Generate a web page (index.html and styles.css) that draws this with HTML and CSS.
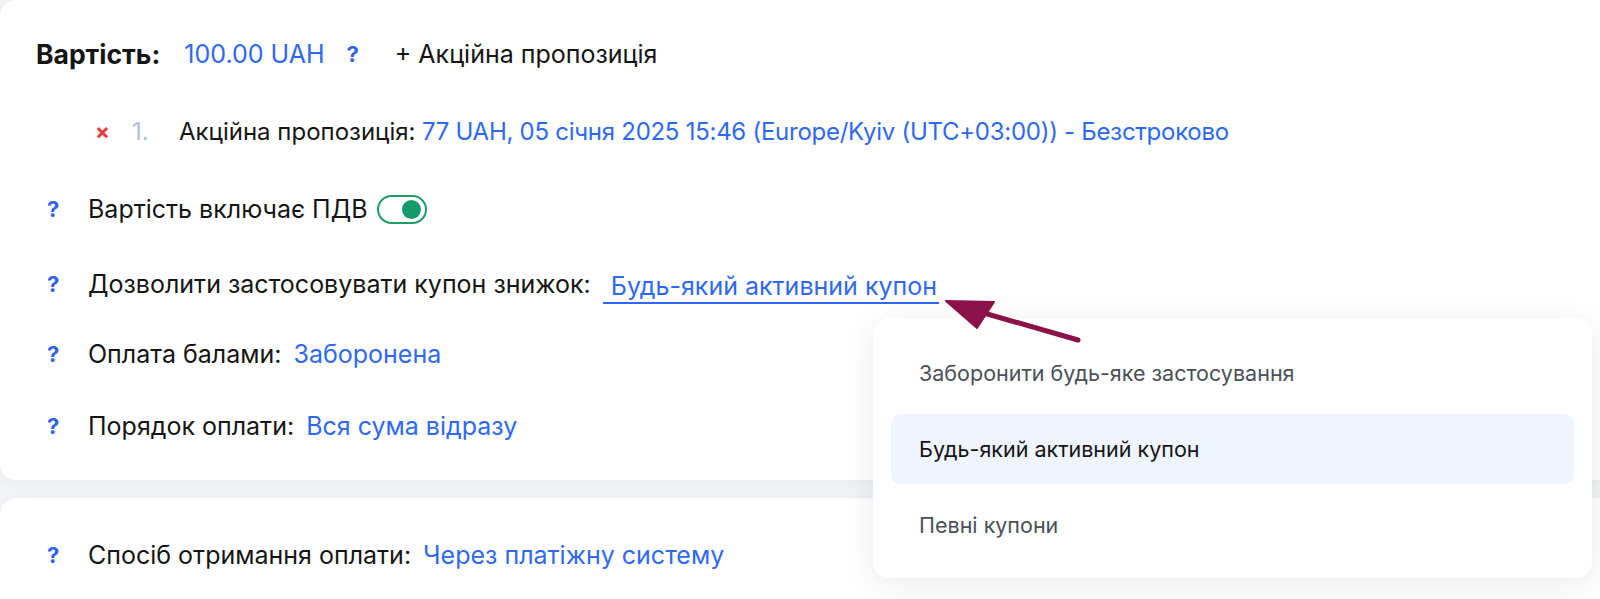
FILE: index.html
```html
<!DOCTYPE html>
<html lang="uk">
<head>
<meta charset="utf-8">
<link rel="stylesheet" href="styles.css">
</head>
<body>
<div class="page">
  <section class="card card-top">
    <div class="row row-price">
      <span class="label-bold">Вартість:</span>
      <span class="link price">100.00 UAH</span>
      <span class="q q-price">?</span>
      <span class="add">+ Акційна пропозиція</span>
    </div>
    <div class="row row-offer">
      <span class="remove">×</span>
      <span class="num">1.</span>
      <span class="text">Акційна пропозиція:</span>
      <span class="link offer-link">&nbsp;77 UAH, 05 січня 2025 15:46 (Europe/Kyiv (UTC+03:00)) - Безстроково</span>
    </div>
    <div class="row row-opt">
      <span class="q">?</span>
      <span class="text">Вартість включає ПДВ</span>
      <span class="toggle"><span class="knob"></span></span>
    </div>
    <div class="row row-opt">
      <span class="q">?</span>
      <span class="text">Дозволити застосовувати купон знижок:</span>
      <span class="link select-link">Будь-який активний купон</span>
    </div>
    <div class="row row-opt">
      <span class="q">?</span>
      <span class="text">Оплата балами:</span>
      <span class="link">Заборонена</span>
    </div>
    <div class="row row-opt">
      <span class="q">?</span>
      <span class="text">Порядок оплати:</span>
      <span class="link">Вся сума відразу</span>
    </div>
  </section>
  <section class="card card-bottom">
    <div class="row row-opt">
      <span class="q">?</span>
      <span class="text">Спосіб отримання оплати:</span>
      <span class="link">Через платіжну систему</span>
    </div>
  </section>

  <div class="dropdown">
    <div class="dd-item">Заборонити будь-яке застосування</div>
    <div class="dd-item active">Будь-який активний купон</div>
    <div class="dd-item">Певні купони</div>
  </div>

  <svg class="arrow" width="1600" height="599" viewBox="0 0 1600 599">
    <line x1="1078" y1="340" x2="970" y2="309" stroke="#8b1249" stroke-width="5" stroke-linecap="round"/>
    <polygon points="946,301 994,302 977,328" fill="#8b1249" stroke="#8b1249" stroke-width="2" stroke-linejoin="round"/>
  </svg>
</div>
</body>
</html>
```
FILE: styles.css
```css
* { box-sizing: border-box; }
html, body { margin: 0; padding: 0; }
body {
  background: #f3f4f7;
  font-family: "Inter", "Noto Sans", sans-serif;
  font-size: 25px;
  color: #151515;
  width: 1600px;
  height: 599px;
  overflow: hidden;
}
.page { position: relative; width: 1600px; height: 599px; }
.card {
  background: #fff;
  border-radius: 16px 0 0 16px;
  box-shadow: 0 2px 14px rgba(30, 40, 80, 0.05);
}
.card-top { padding: 38px 0 38px 0; height: 480px; }
.card-bottom { margin-top: 18px; padding-top: 41px; height: 120px; border-radius: 16px 0 0 0; }
.row { display: flex; align-items: center; height: 32px; white-space: nowrap; }
.row + .row { margin-top: 43px; }
.row-offer { margin-top: 45px !important; }
.card-top .row:nth-child(3) { margin-top: 46px; }
.card-top .row:nth-child(5) { margin-top: 38px; }
.card-top .row:nth-child(6) { margin-top: 40px; }

.row-price { padding-left: 36px; }
.label-bold { font-weight: 700; font-size: 26.5px; margin-right: 24px; }
.link { color: #2e68f7; }
.price { margin-right: 22px; }
.q { color: #2f5ff0; font-weight: 700; font-size: 22px; width: 41px; }
.q-price { width: auto; margin-right: 36px; }
.add { color: #151515; }

.row-offer { padding-left: 95px; font-size: 24px; }
.offer-link { letter-spacing: -0.27px; }
.remove { color: #e13b3b; font-weight: 700; font-size: 22px; width: 37px; }
.num { color: #b3bfd2; width: 47px; }

.row-opt { padding-left: 47px; }
.row-opt .text { margin-right: 12px; }

.toggle {
  width: 50px; height: 29px;
  border: 2px solid #1e9b68;
  border-radius: 15px;
  display: flex; align-items: center; justify-content: flex-end;
  padding-right: 4px;
  margin-left: -3px;
}
.knob { width: 19px; height: 19px; border-radius: 50%; background: #179a6b; }

.select-link {
  border-bottom: 2px solid #2e68f7;
  padding: 0 2px 3px 8px;
  margin-top: 8px;
  line-height: 26px;
}

.dropdown {
  position: absolute;
  left: 873px; top: 318px;
  width: 719px; height: 260px;
  background: #fff;
  border-radius: 16px;
  box-shadow: 0 6px 30px rgba(30, 40, 80, 0.09);
  padding: 20px 18px 17px 18px;
  display: flex; flex-direction: column; gap: 6px;
}
.dd-item {
  height: 70px;
  display: flex; align-items: center;
  padding-left: 28px;
  border-radius: 9px;
  color: #4b4f57;
  font-size: 21.5px;
}
.dd-item.active { background: #eff4fe; color: #141414; }

.arrow { position: absolute; left: 0; top: 0; pointer-events: none; }
```
